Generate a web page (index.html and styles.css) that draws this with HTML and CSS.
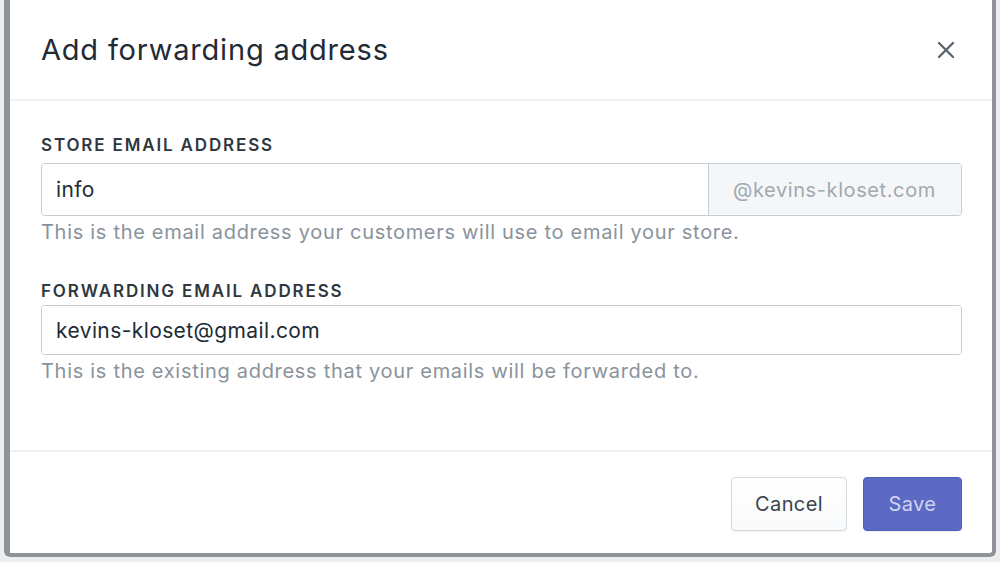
FILE: index.html
```html
<!DOCTYPE html>
<html lang="en">

<head>
    <meta charset="UTF-8">
    <meta name="viewport" content="width=device-width, initial-scale=1.0">
    <title>Add forwarding address</title>
    <link rel="stylesheet" href="styles.css">
</head>

<body>
    <div class="page">
        <div class="modal">
            <div class="modal-header">
                <h1>Add forwarding address</h1>
                <button class="close" aria-label="Close">
                    <svg width="20" height="20" viewBox="0 0 20 20">
                        <path d="M3 3 L17 17 M17 3 L3 17" stroke="#5c6670" stroke-width="2.4" stroke-linecap="round" />
                    </svg>
                </button>
            </div>

            <form class="modal-body">
                <div class="field">
                    <label for="store-email">Store email address</label>
                    <div class="input-group">
                        <input type="text" id="store-email" value="info">
                        <span class="suffix">@kevins-kloset.com</span>
                    </div>
                    <p class="help">This is the email address your customers will use to email your store.</p>
                </div>

                <div class="field field-second">
                    <label for="forward-email">Forwarding email address</label>
                    <div class="input-group">
                        <input type="text" id="forward-email" value="kevins-kloset@gmail.com">
                    </div>
                    <p class="help">This is the existing address that your emails will be forwarded to.</p>
                </div>
            </form>

            <div class="modal-footer">
                <button class="btn">Cancel</button>
                <button class="btn btn-primary">Save</button>
            </div>
        </div>
    </div>
</body>

</html>
```

FILE: styles.css
```css
body {
    margin: 0;
    font-family: Inter, "Noto Sans", sans-serif;
    background-color: #eceef0;
    color: #212b36;
    height: 562px;
    overflow: hidden;
}

.page {
    padding: 0 4px 5px 4px;
}

.modal {
    height: 553px;
    background-color: #fff;
    border-left: 6px solid #8f9399;
    border-right: 4px solid #8f9399;
    border-bottom: 4px solid #8f9399;
    border-radius: 0 0 6px 6px;
    display: flex;
    flex-direction: column;
}

.modal-header {
    height: 99px;
    flex-shrink: 0;
    display: flex;
    align-items: center;
    justify-content: space-between;
    padding: 0 31px;
    border-bottom: 2px solid #eef0f2;
}

h1 {
    margin: 0;
    font-size: 29px;
    font-weight: 400;
    letter-spacing: 0.8px;
    color: #212b36;
}

.close {
    background: none;
    border: none;
    padding: 0;
    margin-right: 5px;
    cursor: pointer;
    display: flex;
}

.modal-body {
    flex: 1;
    padding: 34px 30px 0 31px;
}

.field {
    margin-bottom: 37px;
}

label {
    display: block;
    font-size: 17px;
    font-weight: 600;
    letter-spacing: 1.85px;
    text-transform: uppercase;
    color: #2f3740;
    margin-bottom: 8px;
}

.field-second label {
    margin-bottom: 4px;
}

.input-group {
    display: flex;
    height: 51px;
    border: 1px solid #c4cdd5;
    border-radius: 4px;
    overflow: hidden;
    box-shadow: inset 0 1px 0 rgba(99, 115, 129, 0.05);
}

.field-second .input-group {
    height: 48px;
}

.input-group input {
    flex: 1;
    border: none;
    outline: none;
    padding: 0 14px;
    font-family: inherit;
    font-size: 21px;
    letter-spacing: 0.4px;
    color: #212b36;
    background: #fff;
}

.suffix {
    width: 253px;
    box-sizing: border-box;
    border-left: 1px solid #c4cdd5;
    background-color: #f4f6f8;
    color: #a1a9b1;
    font-size: 20px;
    letter-spacing: 0.6px;
    display: flex;
    align-items: center;
    padding-left: 24px;
}

.help {
    margin: 4px 0 0;
    font-size: 20px;
    letter-spacing: 0.7px;
    color: #8a939c;
}

.modal-footer {
    flex-shrink: 0;
    border-top: 2px solid #eef0f2;
    display: flex;
    justify-content: flex-end;
    gap: 16px;
    padding: 25px 30px 0;
    height: 103px;
    box-sizing: border-box;
}

.btn {
    height: 54px;
    padding: 0 23px;
    font-family: inherit;
    font-size: 20px;
    letter-spacing: 0.4px;
    color: #3a434c;
    background: linear-gradient(180deg, #fff, #f9fafb);
    border: 1px solid #d3d9df;
    border-radius: 4px;
    box-shadow: 0 1px 0 rgba(22, 29, 37, 0.05);
    cursor: pointer;
}

.btn-primary {
    width: 99px;
    padding: 0;
    background: #5c6ac4;
    border-color: #4f5cb8;
    color: #cfd3f1;
}
```
